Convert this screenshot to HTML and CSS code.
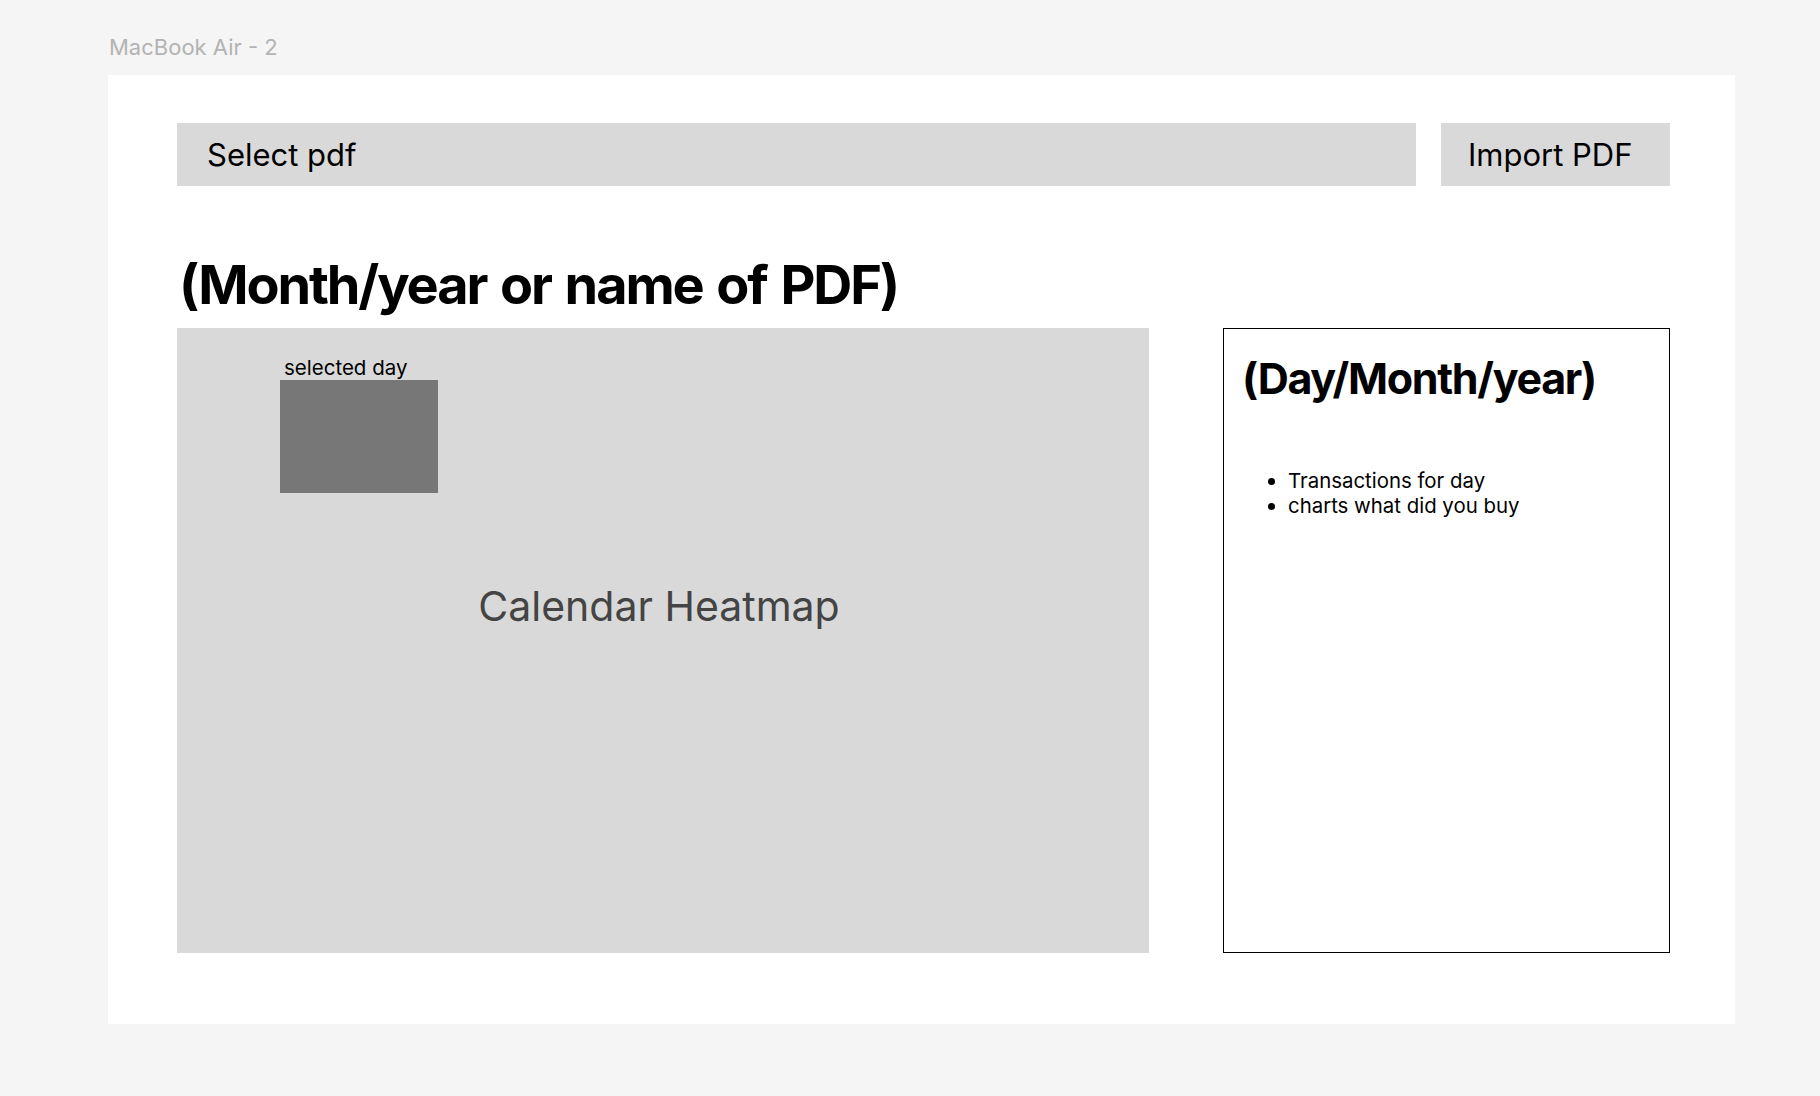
FILE: index.html
```html
<!DOCTYPE html>
<html lang="en">
<head>
<meta charset="utf-8">
<title>MacBook Air - 2</title>
<link rel="stylesheet" href="styles.css">
</head>
<body>
  <div class="frame-label">MacBook Air - 2</div>
  <main class="frame">
    <div class="toolbar">
      <div class="file-field">Select pdf</div>
      <div class="import-btn">Import PDF</div>
    </div>
    <h1 class="title">(Month/year or name of PDF)</h1>
    <div class="content">
      <section class="heatmap">
        <div class="selected-label">selected day</div>
        <div class="selected-box"></div>
        <div class="heatmap-caption">Calendar Heatmap</div>
      </section>
      <aside class="day-panel">
        <h2 class="day-title">(Day/Month/year)</h2>
        <ul class="day-list">
          <li>Transactions for day</li>
          <li>charts what did you buy</li>
        </ul>
      </aside>
    </div>
  </main>
</body>
</html>
```

FILE: styles.css
```css
html, body {
  margin: 0;
  padding: 0;
}
body {
  background: #f5f5f5;
  font-family: Inter, "Noto Sans", sans-serif;
  color: #000;
  padding: 36px 85px 0 108px;
  min-height: 1096px;
  box-sizing: border-box;
}
.frame-label {
  font-size: 22px;
  line-height: 22px;
  color: #b3b3b3;
  margin-left: 1px;
}
.frame {
  margin-top: 17px;
  height: 949px;
  background: #fff;
  box-sizing: border-box;
  padding: 48px 65px 0 69px;
  display: flex;
  flex-direction: column;
}
.toolbar {
  display: flex;
  gap: 25px;
  height: 63px;
}
.file-field,
.import-btn {
  background: #d9d9d9;
  font-size: 31px;
  line-height: 63px;
  height: 63px;
}
.file-field {
  flex: 1;
  padding-left: 30px;
}
.import-btn {
  width: 229px;
  box-sizing: border-box;
  padding-left: 27px;
}
.title {
  margin: 66px 0 0 2px;
  font-size: 54px;
  line-height: 65px;
  font-weight: 700;
  letter-spacing: -2.1px;
  word-spacing: 3px;
  height: 76px;
}
.content {
  display: flex;
  gap: 74px;
  height: 625px;
}
.heatmap {
  width: 972px;
  background: #d9d9d9;
  padding-top: 29px;
  box-sizing: border-box;
  display: flex;
  flex-direction: column;
}
.selected-label {
  font-size: 20.5px;
  line-height: 22px;
  margin-left: 107px;
}
.selected-box {
  margin: 1px 0 0 103px;
  width: 158px;
  height: 113px;
  background: #777777;
}
.heatmap-caption {
  margin-top: 88px;
  font-size: 41px;
  line-height: 50px;
  color: #444444;
  text-align: center;
  padding-right: 8px;
}
.day-panel {
  flex: 1;
  border: 1.5px solid #000;
  box-sizing: border-box;
  padding: 23px 19px 0 18px;
}
.day-title {
  margin: 0;
  font-size: 43px;
  line-height: 52px;
  font-weight: 700;
  letter-spacing: -1.3px;
}
.day-list {
  margin: 64px 0 0 0;
  padding-left: 46px;
  font-size: 20.4px;
  line-height: 25px;
}
```
